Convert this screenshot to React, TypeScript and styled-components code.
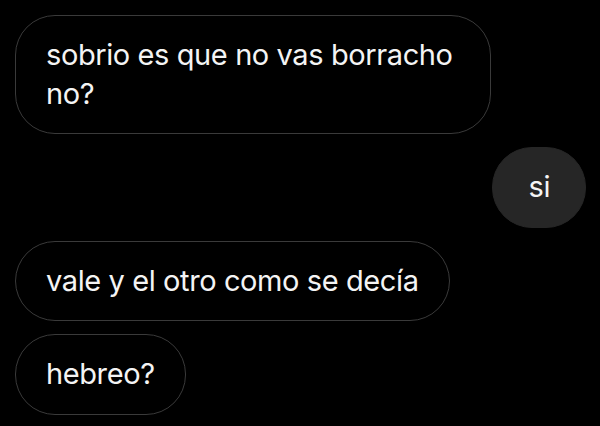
import React from 'react'
import styled, { createGlobalStyle } from 'styled-components'

const GlobalStyle = createGlobalStyle`
    html, body {
        margin: 0;
        padding: 0;
        background: #000;
    }
    * {
        box-sizing: border-box;
    }
`

const StyleThread = styled.div`
    width: 600px;
    height: 426px;
    overflow: hidden;
    background-color: #000;
    display: flex;
    flex-direction: column;
    gap: 13px;
    padding: 15px 14px 0 15px;
    font-family: Inter, "Liberation Sans", sans-serif;
`

const StyleRow = styled.div<{ $mine?: boolean }>`
    display: flex;
    justify-content: ${(p) => (p.$mine ? 'flex-end' : 'flex-start')};
`

const StyleBubble = styled.div<{ $mine?: boolean }>`
    max-width: 476px;
    padding: ${(p) => (p.$mine ? '20px 35px' : '20px 30px')};
    border-radius: 40px;
    border: 1px solid ${(p) => (p.$mine ? '#262626' : '#3a3a3a')};
    background-color: ${(p) => (p.$mine ? '#262626' : '#000')};
    color: #f4f4f4;
    font-size: 29px;
    line-height: 38.5px;
    letter-spacing: -0.4px;
`

const messages = [
    { text: 'sobrio es que no vas borracho no?', mine: false },
    { text: 'si', mine: true },
    { text: 'vale y el otro como se decía', mine: false },
    { text: 'hebreo?', mine: false },
]

export default function App() {
    return (
        <>
            <GlobalStyle />
            <StyleThread>
                {messages.map((m, i) => (
                    <StyleRow key={i} $mine={m.mine}>
                        <StyleBubble $mine={m.mine}>{m.text}</StyleBubble>
                    </StyleRow>
                ))}
            </StyleThread>
        </>
    )
}
